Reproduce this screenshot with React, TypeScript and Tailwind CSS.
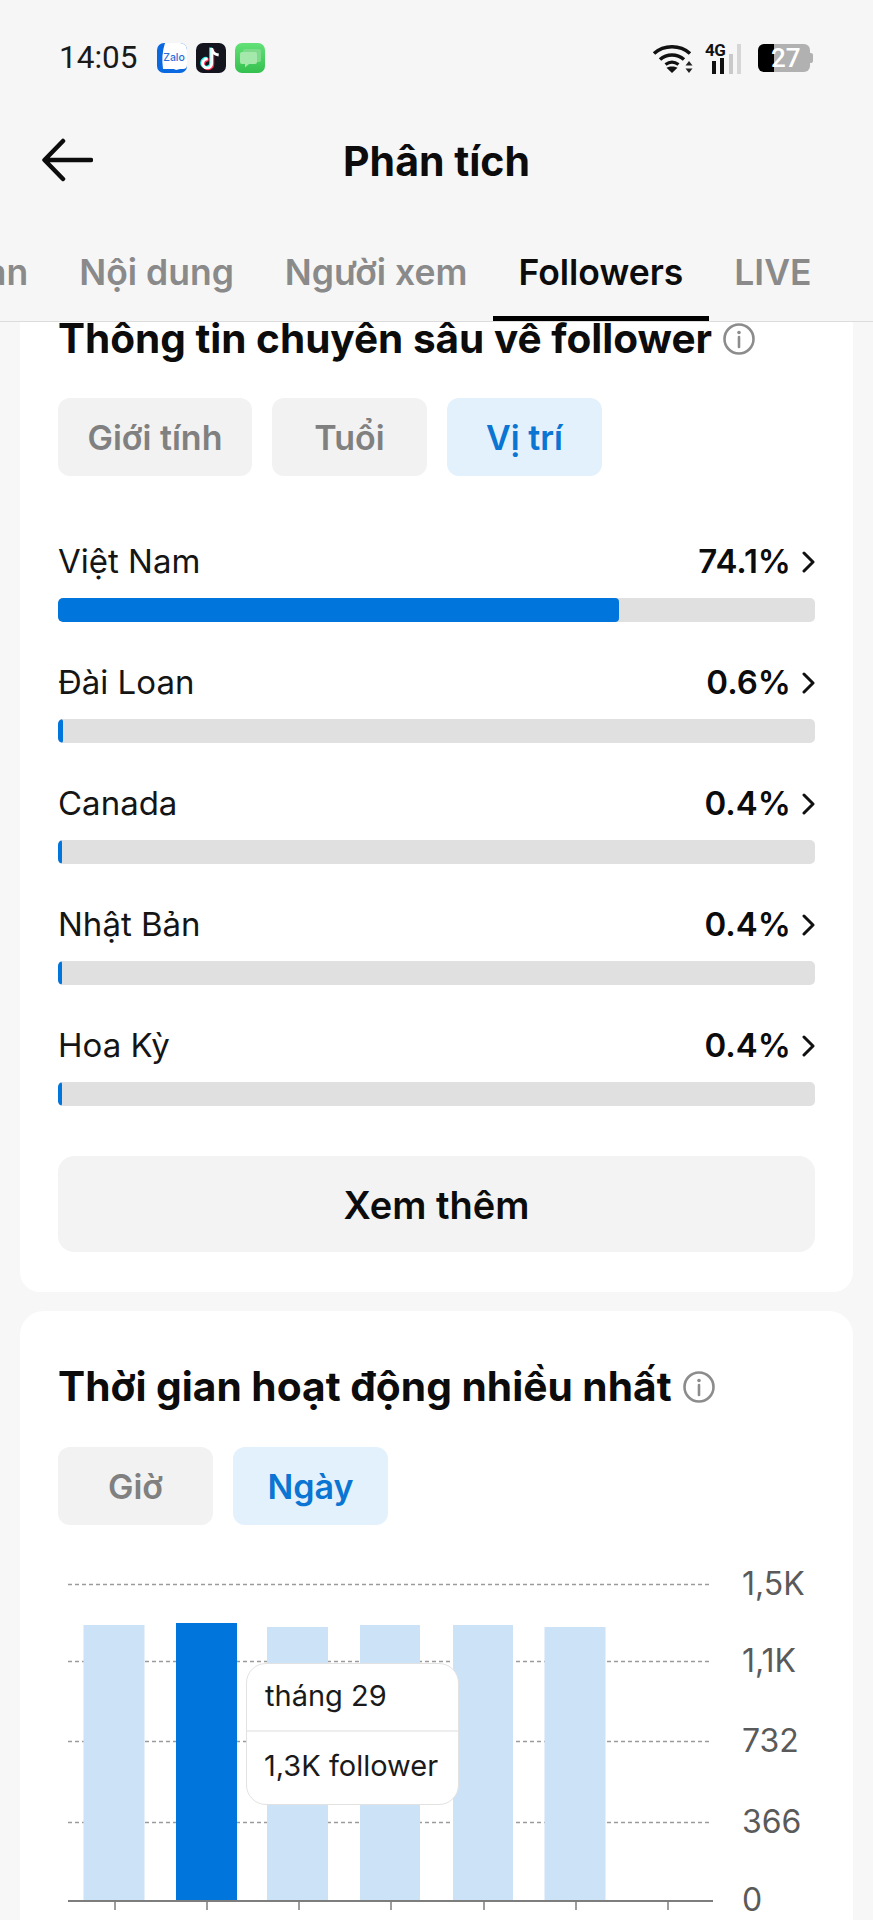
import React from "react";

const sans = "font-['Inter','Liberation_Sans',sans-serif]";

const locations = [
  { name: "Việt Nam", value: "74.1%", fill: 561 },
  { name: "Đài Loan", value: "0.6%", fill: 5 },
  { name: "Canada", value: "0.4%", fill: 4 },
  { name: "Nhật Bản", value: "0.4%", fill: 4 },
  { name: "Hoa Kỳ", value: "0.4%", fill: 4 },
];

const bars = [
  { x: 25.5, top: 65, w: 61 },
  { x: 118, top: 63, w: 61, active: true },
  { x: 209, top: 67, w: 61 },
  { x: 302, top: 65, w: 60 },
  { x: 395, top: 65, w: 60 },
  { x: 486.5, top: 67, w: 61 },
];

const ticks = [57, 149, 241, 333, 426, 518, 610];
const gridLines = [24, 101, 181, 262];

const InfoIcon = () => (
  <svg width="32" height="32" viewBox="0 0 32 32" fill="none" className="shrink-0">
    <circle cx="16" cy="16" r="14.5" stroke="#8c8c8c" strokeWidth="2.6" />
    <circle cx="16" cy="9.5" r="1.8" fill="#8c8c8c" />
    <path d="M16 14v10" stroke="#8c8c8c" strokeWidth="2.6" strokeLinecap="round" />
  </svg>
);

const Chevron = () => (
  <svg width="13" height="22" viewBox="0 0 13 22" fill="none" className="shrink-0">
    <path d="M2 2l9 9-9 9" stroke="#111" strokeWidth="3" strokeLinecap="round" strokeLinejoin="round" />
  </svg>
);

const Chip = ({ label, active, width }: { label: string; active?: boolean; width: string }) => (
  <div
    className={`${width} h-[78px] rounded-[12px] flex items-center justify-center text-[34px] font-semibold ${
      active ? "bg-[#e3f1fc] text-[#0a75d2]" : "bg-[#f2f2f2] text-[#808080]"
    }`}
  >
    {label}
  </div>
);

const StatusBar = () => (
  <div className="h-[115px] flex items-center justify-between pl-[59px] pr-[60px] pt-[1px]">
    <div className="flex items-center">
      <span className="font-['Roboto',sans-serif] text-[31.500px] text-[#1a1a1a] w-[98px]">14:05</span>
      <div className="flex gap-[9px]">
        {/* Zalo */}
        <svg width="30" height="30" viewBox="0 0 30 30">
          <rect width="30" height="30" rx="7" fill="#0a68e0" />
          <path d="M8 0h15a7 7 0 0 1 7 7v15a4 4 0 0 1-4 4h-3l-4 1-2-1H6Q4 12 8 0z" fill="#fff" />
          <text x="17" y="17.500" textAnchor="middle" fontSize="10.500" fontWeight="500" fill="#2a6fd8" fontFamily="Inter, sans-serif">Zalo</text>
        </svg>
        {/* TikTok */}
        <svg width="30" height="30" viewBox="0 0 30 30">
          <rect width="30" height="30" rx="7" fill="#14141f" />
          <path d="M15.700 5v15.500a4.500 4.500 0 1 1-4-4.500" fill="none" stroke="#ff2d55" strokeWidth="3" transform="translate(1 .8)" />
          <path d="M15.700 5v15.500a4.500 4.500 0 1 1-4-4.500" fill="none" stroke="#25f4ee" strokeWidth="3" transform="translate(-1 -.6)" />
          <path d="M15.700 5v15.500a4.500 4.500 0 1 1-4-4.500M15.700 5.500c.5 3.500 3 6 7 6.500" fill="none" stroke="#fff" strokeWidth="2.800" />
        </svg>
        {/* Messages */}
        <svg width="30" height="30" viewBox="0 0 30 30">
          <defs>
            <linearGradient id="msgBg" x1="0" y1="0" x2="0" y2="1">
              <stop offset="0" stopColor="#62e177" />
              <stop offset="1" stopColor="#34c04e" />
            </linearGradient>
          </defs>
          <rect width="30" height="30" rx="7" fill="url(#msgBg)" />
          <path d="M10 6h14a2 2 0 0 1 2 2v9a2 2 0 0 1-2 2H10a2 2 0 0 1-2-2V8a2 2 0 0 1 2-2z" fill="#7ddb8b" />
          <path d="M7 9h13a2 2 0 0 1 2 2v8a2 2 0 0 1-2 2h-6l-4 3.500V21H7a2 2 0 0 1-2-2v-8a2 2 0 0 1 2-2z" fill="#a4e8ac" />
        </svg>
      </div>
    </div>
    <div className="flex items-center">
      {/* Wifi */}
      <svg width="41" height="30" viewBox="0 0 41 30" fill="none" className="mr-[12px]">
        <path d="M2 10.500C12 1.500 28 1.500 38 10.500" stroke="#111" strokeWidth="3.600" />
        <path d="M8 16.500c7-6 17-6 24 0" stroke="#111" strokeWidth="3.600" />
        <path d="M13.500 21.500c4-3 9-3 13 0" stroke="#111" strokeWidth="3.200" />
        <path d="M20 30l-5.500-5.200c3.300-1.800 7.700-1.800 11 0z" fill="#111" />
        <path d="M37 18l3.500 4.500h-7zM37 30l-3.500-4.500h7z" fill="#222" />
      </svg>
      {/* 4G + signal */}
      <div className="relative w-[38px] h-[31px] mr-[15px]">
        <span className="absolute left-0 -top-[5px] font-['Roboto',sans-serif] text-[17px] font-bold text-[#111] tracking-[-0.5px]">4G</span>
        <svg width="38" height="31" viewBox="0 0 38 31">
          <rect x="7" y="18" width="4" height="13" fill="#111" />
          <rect x="15" y="15" width="4" height="16" fill="#111" />
          <rect x="24" y="11" width="4" height="20" fill="#c9c9c9" />
          <rect x="32" y="1" width="4" height="30" fill="#d6d6d6" />
        </svg>
      </div>
      {/* Battery */}
      <div className="relative flex w-[55px] h-[28px]">
        <div className="w-[16px] h-full bg-black rounded-l-[6px]" />
        <div className="w-[36px] h-full bg-[#b1b1b1] rounded-r-[6px]" />
        <div className="w-[3px] h-[10px] self-center bg-[#b1b1b1] rounded-r-[2px]" />
        <span className="absolute left-[13px] top-0 leading-[28px] font-['Roboto',sans-serif] text-[26px] font-medium text-white">27</span>
      </div>
    </div>
  </div>
);

const Header = () => (
  <header className="relative z-10 h-[322px] shrink-0 bg-[#f6f6f6] border-b border-[#dcdcdc]">
    <StatusBar />
    <div className="relative h-[94px] flex items-center justify-center">
      <svg width="52" height="44" viewBox="0 0 52 44" fill="none" className="absolute left-[41px] top-[23px]">
        <path d="M50 22H4M22 3L3.500 22 22 41" stroke="#0c0c0c" strokeWidth="4.500" strokeLinecap="round" strokeLinejoin="round" />
      </svg>
      <h1 className="text-[41px] font-bold text-[#0c0c0c]">Phân tích</h1>
    </div>
    <nav className="h-[112px] flex justify-end overflow-hidden pr-[36px] text-[35.500px] font-semibold text-[#8a8a8a]">
      {["Tổng quan", "Nội dung", "Người xem", "Followers", "LIVE"].map((tab) => (
        <div
          key={tab}
          className={`shrink-0 h-[112px] px-[25.500px] pt-[37px] border-b-[5px] ${
            tab === "Followers" ? "border-black text-[#0c0c0c]" : "border-transparent"
          }`}
        >
          {tab}
        </div>
      ))}
    </nav>
  </header>
);

const LocationRow = ({ name, value, fill }: { name: string; value: string; fill: number }) => (
  <div>
    <div className="h-[40px] mb-[17px] flex items-center justify-between pt-[2px]">
      <span className="text-[33px] text-[#151515]">{name}</span>
      <div className="flex items-center gap-[11px]">
        <span className="text-[33px] font-semibold text-[#0c0c0c]">{value}</span>
        <Chevron />
      </div>
    </div>
    <div className="h-[24px] rounded-[5px] bg-[#e0e0e0] overflow-hidden">
      <div className="h-full rounded-[4px] bg-[#0075db]" style={{ width: fill }} />
    </div>
  </div>
);

const Chart = () => (
  <div className="relative mt-[35px] flex">
    <svg width="675" height="360" viewBox="0 0 675 360" className="shrink-0">
      {gridLines.map((y) => (
        <line key={y} x1="10" x2="653" y1={y + 0.5} y2={y + 0.5} stroke="#9b9b9b" strokeWidth="1.5" strokeDasharray="4 3" />
      ))}
      {bars.map((b) => (
        <rect key={b.x} x={b.x} y={b.top} width={b.w} height={340 - b.top} fill={b.active ? "#0075db" : "#cce2f7"} />
      ))}
      <line x1="10" x2="655" y1="341" y2="341" stroke="#7d7d7d" strokeWidth="2" />
      {ticks.map((x) => (
        <line key={x} x1={x} x2={x} y1="341" y2="350" stroke="#7d7d7d" strokeWidth="1.5" />
      ))}
    </svg>
    <div className="grid grid-rows-[77px_80px_81px_78px_40px] pl-[9px] pt-[4px] text-[32px] leading-[40px] text-[#5a5a5a]">
      {["1,5K", "1,1K", "732", "366", "0"].map((label) => (
        <span key={label}>{label}</span>
      ))}
    </div>
    <div className="absolute left-[188px] top-[103px] w-[213px] h-[142px] bg-white border border-[#e2e2e2] rounded-[20px] text-[29px] text-[#1a1a1a]">
      <div className="h-[68px] border-b-2 border-[#eeeeee] pl-[18px] pb-[2px] flex items-center">tháng 29</div>
      <div className="h-[70px] pl-[17px] pb-[2px] flex items-center">1,3K follower</div>
    </div>
  </div>
);

export default function App() {
  return (
    <div className={`${sans} w-[873px] h-[1920px] overflow-hidden bg-[#f7f7f7] flex flex-col`}>
      <Header />
      <main className="flex-1 overflow-hidden px-[20px]">
        <section className="bg-white rounded-b-[20px] px-[38px] pb-[40px] -mt-[6px]">
          <div className="h-[46px] flex items-center gap-[11px] mb-[36px]">
            <h2 className="text-[40.500px] font-bold text-[#0c0c0c] whitespace-nowrap">Thông tin chuyên sâu về follower</h2>
            <InfoIcon />
          </div>
          <div className="flex gap-[20px] mb-[65px]">
            <Chip label="Giới tính" width="w-[194px]" />
            <Chip label="Tuổi" width="w-[155px]" />
            <Chip label="Vị trí" width="w-[155px]" active />
          </div>
          <div className="flex flex-col gap-[40px]">
            {locations.map((loc) => (
              <LocationRow key={loc.name} {...loc} />
            ))}
          </div>
          <button className="mt-[50px] w-full h-[96px] pt-[2px] rounded-[16px] bg-[#f3f3f3] text-[38px] font-semibold text-[#0c0c0c]">
            Xem thêm
          </button>
        </section>
        <section className="mt-[19px] bg-white rounded-t-[24px] px-[38px] pt-[53px] pb-[40px]">
          <div className="h-[46px] flex items-center gap-[11px] mb-[37px]">
            <h2 className="text-[40.700px] font-bold text-[#0c0c0c] whitespace-nowrap">Thời gian hoạt động nhiều nhất</h2>
            <InfoIcon />
          </div>
          <div className="flex gap-[20px]">
            <Chip label="Giờ" width="w-[155px]" />
            <Chip label="Ngày" width="w-[155px]" active />
          </div>
          <Chart />
        </section>
      </main>
    </div>
  );
}
